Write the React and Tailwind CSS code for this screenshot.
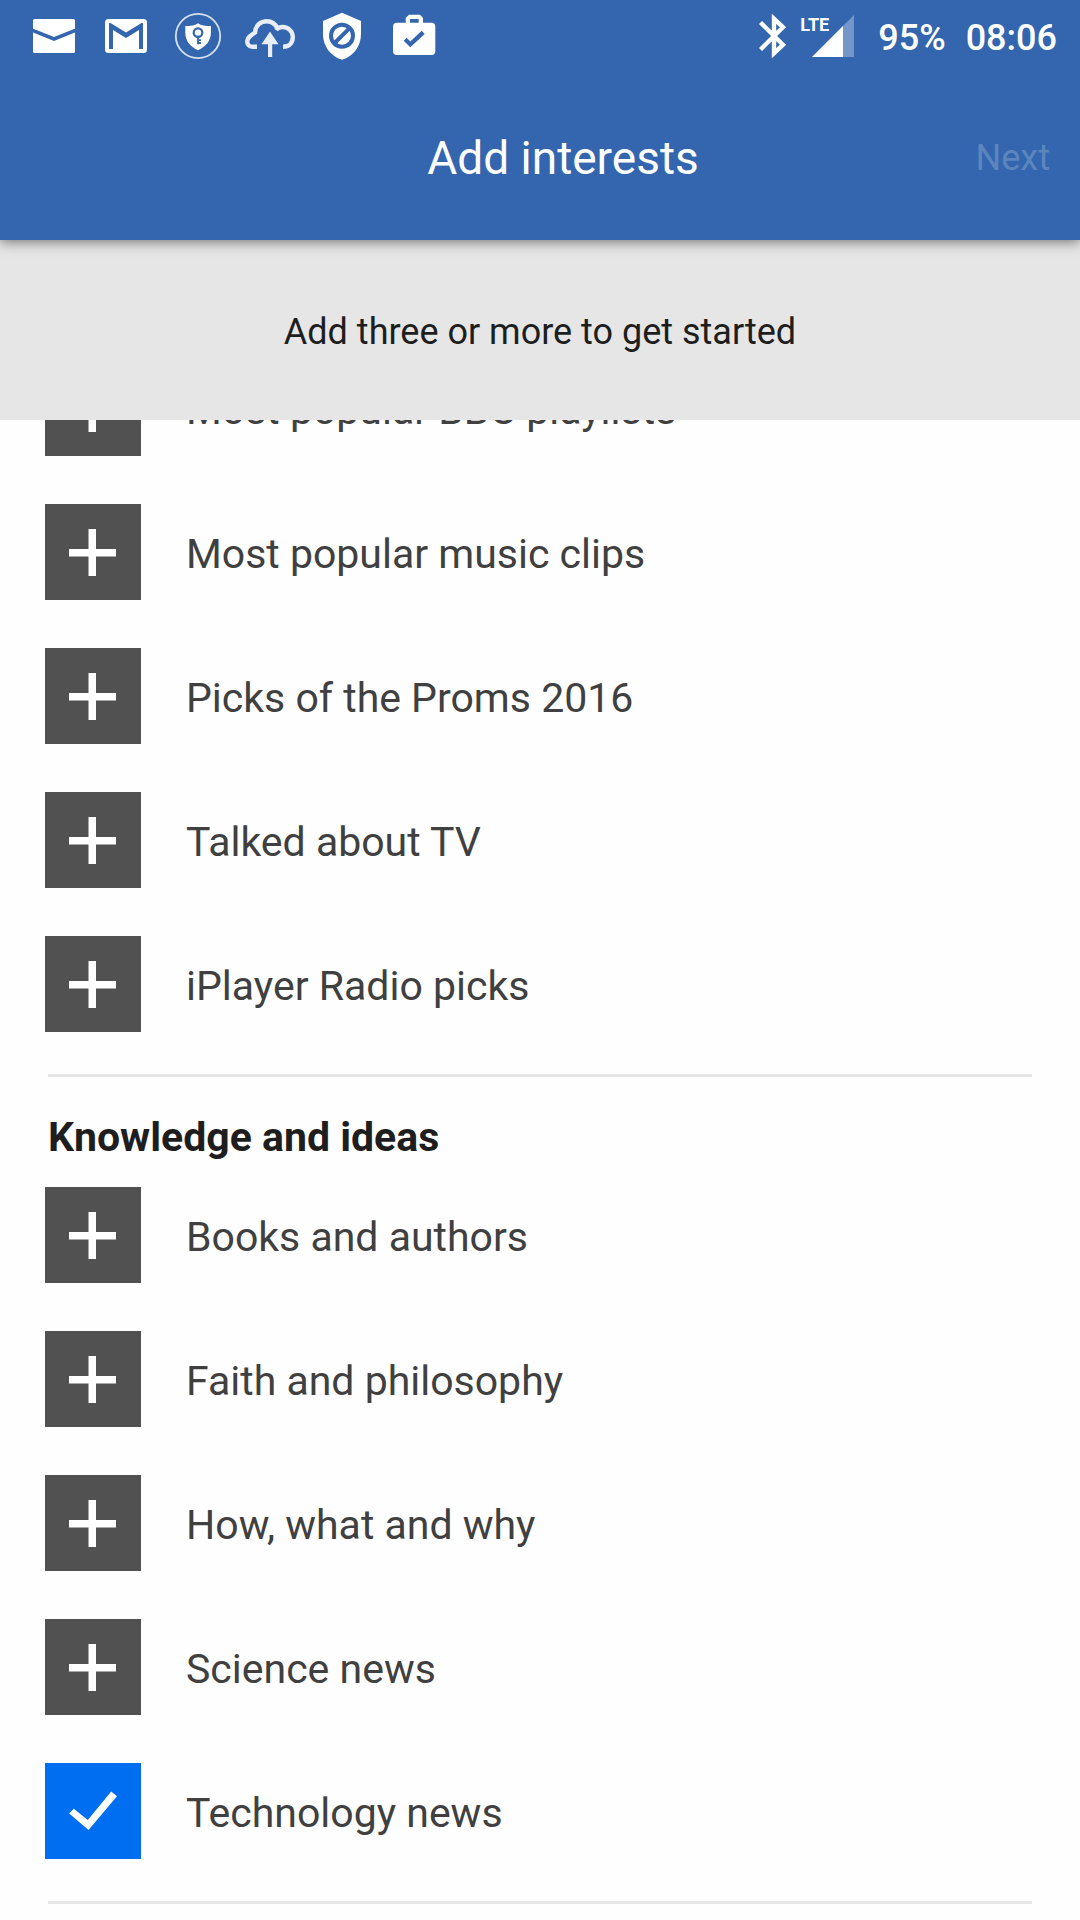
import { useState } from "react";

const topPicks = [
    "Most popular BBC playlists",
    "Most popular music clips",
    "Picks of the Proms 2016",
    "Talked about TV",
    "iPlayer Radio picks",
];

const knowledge = [
    "Books and authors",
    "Faith and philosophy",
    "How, what and why",
    "Science news",
    "Technology news",
];

const StatusIcon = ({ children }) => (
    <svg viewBox="0 0 48 48" className="size-12 shrink-0 overflow-visible" fill="none" aria-hidden="true">
        {children}
    </svg>
);

const NotificationIcons = () => (
    <div className="flex items-center gap-6">
        <StatusIcon>
            <rect x="3" y="7" width="42" height="34" rx="1.5" fill="#fff" />
            <path d="M2 18.2 24 27 46 18.2" stroke="#3366ae" strokeWidth="3.6" />
        </StatusIcon>
        <StatusIcon>
            <rect x="3" y="7" width="42" height="34" rx="3.5" fill="#fff" />
            <path d="M7 37V11H8.5L24 20.5 39.5 11H41V37H37V18L24 26 11 18V37Z" fill="#3366ae" />
        </StatusIcon>
        <StatusIcon>
            <circle cx="24" cy="24" r="22.2" stroke="#d6e0ef" strokeWidth="1.8" />
            <path d="M24 11.2C21 13.6 16.5 14 11.3 14V21C11.5 29 16 34.5 24 38.3 32 34.5 36.7 29 36.9 21V14C31.5 14 27 13.6 24 11.2Z" fill="#fff" />
            <circle cx="24" cy="20.6" r="4.3" stroke="#3366ae" strokeWidth="2.2" />
            <path d="M24 25V32.3M24 28.2H27M24 31H27" stroke="#3366ae" strokeWidth="1.8" />
        </StatusIcon>
        <StatusIcon>
            <path
                d="M11 34.8H6.5C3 34.8 1.2 32 1.2 29.5 1.2 25.5 4 24 9 20.5 9.5 13.5 14.5 9.2 21 9.2 26 9.2 29.5 12 32 17M30 18C31.5 16 34 15 36.5 15 42.5 15 46.8 19.5 46.8 25 46.8 31 43 34.8 37 34.8"
                stroke="#e8edf7"
                strokeWidth="4.4"
            />
            <path d="M24 19.5 32.5 32.3H26.2V45H22V32.3H15.5Z" fill="#e8edf7" />
        </StatusIcon>
        <StatusIcon>
            <path d="M24 .7 43 9V22C43 34 35.5 44.5 24 47.7 12.5 44.5 5 34 5 22V9Z" fill="#fff" />
            <circle cx="24" cy="23.7" r="11" stroke="#3366ae" strokeWidth="4" />
            <path d="M16.2 31.5 31.8 15.9" stroke="#3366ae" strokeWidth="4" />
        </StatusIcon>
        <StatusIcon>
            <path
                fillRule="evenodd"
                d="M19 2.7H30L33 6V10.7H41.5Q45.3 10.7 45.3 14.5V39Q45.3 43 41.5 43H7Q3 43 3 39V14.5Q3 10.7 7 10.7H15.7V6ZM20 7V10.7H28.7V7Z"
                fill="#fff"
            />
            <path d="M13.7 28.7 16.7 25.8 20.3 29.5 31.7 18.8 34.7 21.9 20.3 35.3Z" fill="#3366ae" />
        </StatusIcon>
    </div>
);

const Signal = () => (
    <div className="relative pl-3">
        <svg viewBox="0 0 42 42" className="size-[42px]" aria-hidden="true">
            <path d="M42 0V42H0Z" fill="#7397ca" />
            <path d="M31 11V42H0Z" fill="#fff" />
        </svg>
        <span className="absolute top-0 left-0 text-[18px] leading-5 font-bold">LTE</span>
    </div>
);

const StatusBar = () => (
    <div className="flex h-18 items-center justify-between pr-[23px] pl-[30px]">
        <NotificationIcons />
        <div className="flex items-center text-[36px] leading-10 font-medium">
            <svg viewBox="0 0 27 44" className="mr-3.5 h-11 w-[27px]" fill="none" aria-hidden="true">
                <path d="M1.5 8.500 24 30.800 15 39.200V4.800L24 13.200 1.500 35.500" stroke="#fff" strokeWidth="4.4" />
            </svg>
            <Signal />
            <span className="ml-6 pt-1">95%</span>
            <span className="ml-5 pt-1">08:06</span>
        </div>
    </div>
);

const InterestRow = ({ name, checked, onToggle }) => (
    <li>
        <label className="flex h-36 items-center gap-[45px] pl-[45px] text-[41px] leading-12 text-[#404040]">
            <span className="grid shrink-0">
                <input
                    type="checkbox"
                    checked={checked}
                    onChange={onToggle}
                    className="col-start-1 row-start-1 size-24 appearance-none bg-[#515151] checked:bg-[#006ef0]"
                />
                <svg
                    viewBox="0 0 96 96"
                    className="pointer-events-none col-start-1 row-start-1 size-24"
                    fill="#fff"
                    aria-hidden="true"
                >
                    {checked ? (
                        <path d="M24.2 50.5 28.8 45.8 42.8 57 66.2 28.5 72 33.2 43.5 67Z" />
                    ) : (
                        <path d="M43.5 25H51V45H71V52.5H51V72H43.5V52.5H24V45H43.5Z" />
                    )}
                </svg>
            </span>
            <span className="pt-1">{name}</span>
        </label>
    </li>
);

const InterestList = ({ names, selected, onToggle }) => (
    <ul>
        {names.map((name) => (
            <InterestRow
                key={name}
                name={name}
                checked={selected.includes(name)}
                onToggle={() => onToggle(name)}
            />
        ))}
    </ul>
);

export default function App() {
    const [selected, setSelected] = useState(["Technology news"]);

    const toggle = (name) => {
        setSelected((prev) =>
            prev.includes(name) ? prev.filter((n) => n !== name) : [...prev, name]
        );
    };

    return (
        <div className="min-h-screen bg-[#fefefe] font-['Roboto',sans-serif]">
            <div className="sticky top-0 z-10">
                <header className="relative bg-[#3366ae] text-white shadow-[0_2px_12px_rgba(0,0,0,0.5)]">
                    <StatusBar />
                    <div className="grid h-42 grid-cols-[1fr_auto_1fr] items-center pt-1 pr-[30px] pl-19">
                        <h1 className="col-start-2 text-[46px] leading-14">Add interests</h1>
                        <button
                            type="button"
                            disabled={selected.length < 3}
                            className="justify-self-end text-[36px] leading-10 disabled:text-[#5c85be]"
                        >
                            Next
                        </button>
                    </div>
                </header>
                <p className="bg-[#e6e6e6] pt-18 pb-17 text-center text-[36px] leading-10 text-[#1e1e1e]">
                    Add three or more to get started
                </p>
            </div>

            {/* list is scrolled part of the way under the header */}
            <main className="-mt-[84px]">
                <InterestList names={topPicks} selected={selected} onToggle={toggle} />
                <section>
                    <hr className="mx-12 mt-[18px] border-t-3 border-[#e6e6e6]" />
                    <h2 className="px-12 pt-9 pb-0.5 text-[41px] leading-12 font-bold text-[#1e1e1e]">
                        Knowledge and ideas
                    </h2>
                    <InterestList names={knowledge} selected={selected} onToggle={toggle} />
                </section>
                <hr className="mx-12 mt-[18px] border-t-3 border-[#e6e6e6]" />
            </main>
        </div>
    );
}
